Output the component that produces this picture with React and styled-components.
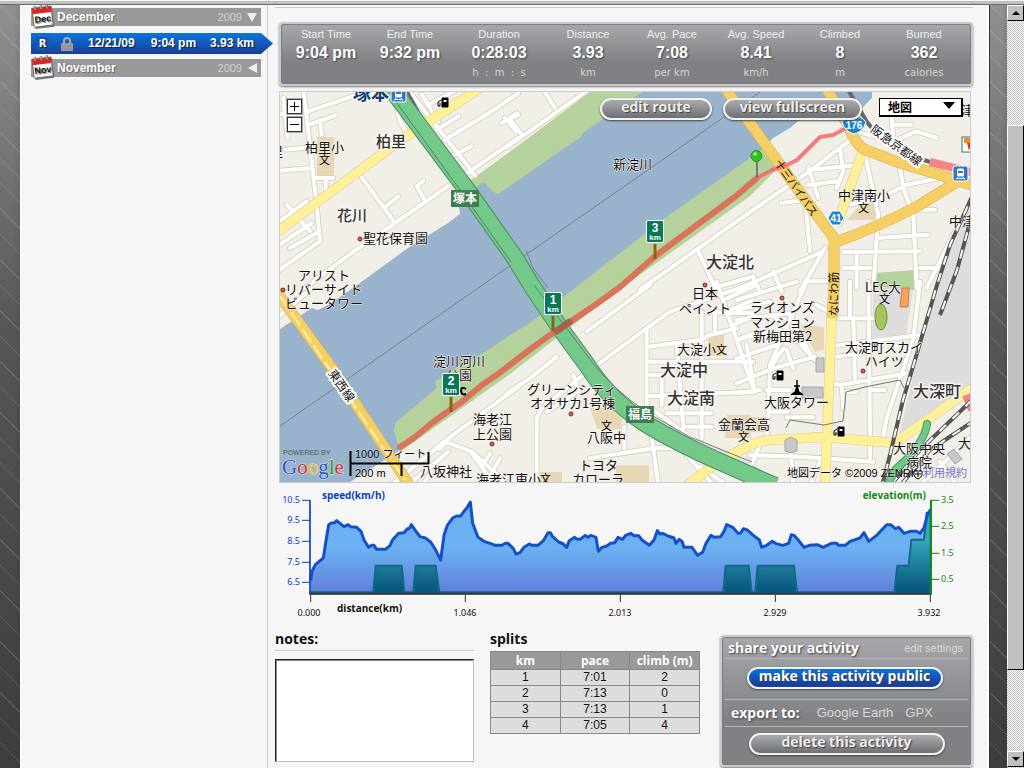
import React from 'react';
import styled, { createGlobalStyle, css } from 'styled-components';

const sans = '"Liberation Sans", "Noto Sans CJK JP", sans-serif';
const display = '"Open Sans", "Noto Sans", sans-serif';
const jp = '"Noto Sans CJK JP", "Liberation Sans", sans-serif';

const GlobalStyle = createGlobalStyle`
  *, *::before, *::after { box-sizing: border-box; }
  body { margin: 0; background: #4a4c4c; font-family: ${sans}; color: #111; }
  h2, p { margin: 0; }
  button { cursor: pointer; }
`;

/* ---------- page frame ---------- */

const Page = styled.div`
  display: flex;
  flex-direction: column;
  min-height: 100vh;
`;

const WindowEdge = styled.div`
  height: 5px;
  background: #c0c0c0;
  border-top: 1px solid #f4f4f4;
  border-bottom: 1px solid #6c6c6c;
`;

const Body = styled.div`
  display: flex;
  flex: 1;
`;

const Gutter = styled.div`
  width: ${(p) => (p.$side === 'left' ? 20 : 18)}px;
  flex: none;
  background:
    repeating-linear-gradient(45deg, transparent 0 17px, rgba(255, 255, 255, 0.12) 17px 18px),
    linear-gradient(90deg, transparent 0 70%, rgba(0, 0, 0, 0.08)),
    linear-gradient(#909090, #565858 42%, #3c3e3e);
  ${(p) => p.$side === 'right' && 'border-left: 1px solid #333;'}
`;

const Sheet = styled.div`
  display: flex;
  flex: 1;
  min-width: 0;
  background: #f6f6f6;
  border-left: 1px solid #fff;
  border-right: 2px solid #fff;
`;

/* ---------- window scroll bar ---------- */

const ScrollBar = styled.div`
  display: flex;
  flex-direction: column;
  flex: none;
  width: 17px;
  padding-bottom: 1px;
  background: repeating-conic-gradient(#fff 0 25%, #c0c0c0 0 50%) 0 0 / 2px 2px;
`;

const bevel = css`
  background: #c0c0c0;
  border: 1px solid;
  border-color: #fff #000 #000 #fff;
`;

const ScrollButton = styled.button`
  ${bevel}
  display: grid;
  place-items: center;
  height: 16px;
  padding: 0;
`;

const ScrollSpace = styled.div`
  flex: ${(p) => p.$share};
`;

const ScrollThumb = styled.div`
  ${bevel}
  flex: 546;
`;

/* ---------- sidebar ---------- */

const Sidebar = styled.nav`
  display: flex;
  flex-direction: column;
  flex: none;
  width: 247px;
  padding: 3px 6px 0 10px;
  border-right: 1px solid #ccc;
`;

const MonthRow = styled.button`
  position: relative;
  display: flex;
  align-items: center;
  height: 18px;
  padding: 0 4px 0 26px;
  border: 0;
  background: #999;
  color: #fff;
  font: bold 12px/18px ${sans};
  text-shadow: 1px 1px 1px #666;
`;

const MonthYear = styled.span`
  margin-left: auto;
  margin-right: 5px;
  color: #d2d2d2;
  font-size: 11px;
  font-weight: normal;
  text-shadow: none;
`;

const CalendarArt = styled.svg`
  position: absolute;
  left: 0;
  top: -4px;
`;

const ActivityLink = styled.a`
  display: flex;
  align-items: center;
  height: 21px;
  margin: 7px -12px 5px 0;
  padding: 0 19px 0 5px;
  background: linear-gradient(#0a74dc, #1a3f9a);
  clip-path: polygon(0 0, calc(100% - 12px) 0, 100% 50%, calc(100% - 12px) 100%, 0 100%);
  color: #fff;
  font: bold 12px/21px ${sans};
  text-decoration: none;
  text-shadow: 1px 1px 1px #123;
  white-space: nowrap;
`;

const ActivityDate = styled.span`margin-left: 15px;`;
const ActivityTime = styled.span`margin-left: 16px;`;
const ActivityDistance = styled.span`margin-left: auto;`;
const LockArt = styled.svg`margin-left: 12px;`;

/* ---------- main column ---------- */

const Main = styled.main`
  flex: 1;
  min-width: 0;
  padding: 2px 14px 1px 7px;
`;

const Rule = styled.hr`
  height: 1px;
  margin: 0;
  border: 0;
  background: #ccc;
`;

const metal = css`
  border: 2px solid #c9cacb;
  border-radius: 4px;
  background: linear-gradient(#a7a8ac, #808185 65%);
  box-shadow: 0 1px 2px #777, inset 0 0 1px 1px #7a7b7e;
  color: #fff;
`;

const StatsPanel = styled.dl`
  ${metal}
  display: grid;
  grid-template-columns: 84fr 84fr 94fr 84fr 84fr 84fr 84fr 84fr;
  margin: 14px 0 5px 4px;
  padding: 3px 5px 5px 3px;
  text-align: center;
`;

const StatLabel = styled.dt`
  color: #eee;
  font: 11px/14px ${sans};
`;

const StatValue = styled.dd`
  margin: 0;
  font: bold 16px/24px ${sans};
  text-shadow: 1px 1px 2px #444;
`;

const StatUnit = styled.dd`
  height: 14px;
  margin: 0;
  color: #d4d4d4;
  font: 10px/16px "DejaVu Sans", sans-serif;
  white-space: pre;
`;

const pillKinds = {
  gray: 'linear-gradient(#a9abae, #6d6f72)',
  blue: 'linear-gradient(#0872e0, #1b3f9c 85%)',
};

const Pill = styled.button`
  width: ${(p) => p.$width}px;
  height: 22px;
  padding: 0 0 4px;
  border: 2px solid #f2f2f2;
  border-radius: 11px;
  background: ${(p) => pillKinds[p.$kind || 'gray']};
  box-shadow: 0 1px 2px #444;
  color: ${(p) => (p.$kind === 'blue' ? '#fff' : '#ececec')};
  font: bold 14px/14px ${display};
  text-shadow: 1px 1px 1px #444;
  white-space: nowrap;
`;

/* ---------- map ---------- */

const MapFrame = styled.section`
  position: relative;
  margin: 0 2px 0 4px;
  border: 1px solid #ccc;
`;

const MapArt = styled.svg`
  display: block;
  width: 100%;
  height: auto;
`;

const ZoomControls = styled.div`
  position: absolute;
  top: 7px;
  left: 7px;
  display: grid;
  gap: 3px;
`;

const ZoomButton = styled.button`
  display: grid;
  place-items: center;
  width: 15px;
  height: 15px;
  padding: 0;
  border: 1px solid #333;
  background: #fff;
  box-shadow: 0 0 0 1px rgba(80, 80, 80, 0.4);
`;

const MapToolbar = styled.div`
  position: absolute;
  top: 6px;
  right: 7px;
  display: flex;
  gap: 11px;
`;

const MapTypeBox = styled.div`
  position: relative;
  margin-left: 6px;
`;

const MapTypeSelect = styled.select`
  width: 84px;
  height: 19px;
  padding: 0 8px;
  appearance: none;
  border: 1px solid #000;
  border-right-width: 2px;
  border-bottom-width: 2px;
  border-radius: 0;
  background: #fff;
  color: #000;
  font: bold 12px/16px ${jp};
`;

const SelectArrow = styled.svg`
  position: absolute;
  top: 4px;
  right: 8px;
  pointer-events: none;
`;

const ChartArt = styled.svg`
  display: block;
  width: 100%;
  height: auto;
  margin-top: 1px;
`;

/* ---------- bottom row ---------- */

const BottomRow = styled.div`
  display: grid;
  grid-template-columns: 215fr 230fr 253fr;
  align-items: start;
  margin-top: 8px;
`;

const NotesSection = styled.section`
  padding-right: 16px;
`;

const SplitsSection = styled.section`
  padding-right: 20px;
`;

const Heading = styled.h2`
  font: bold 14px/18px ${display};
`;

const NotesRule = styled(Rule)`
  margin: 2px 0 8px;
`;

const NotesBox = styled.textarea`
  display: block;
  width: 100%;
  height: 103px;
  border: 1px solid;
  border-color: #222 #bbb #bbb #222;
  border-radius: 0;
  background: #fff;
  box-shadow: inset 1px 1px 0 #888;
  resize: none;
`;

const SplitsTable = styled.table`
  width: 100%;
  margin-top: 3px;
  border-collapse: collapse;
  table-layout: fixed;
  text-align: center;

  th, td { height: 16px; padding: 0; border: 1px solid #888; }
  th { background: #999; color: #fff; font: bold 12px/17px ${display}; }
  td { background: #ddd; font: 12px/15px ${sans}; }
`;

const SharePanel = styled.section`
  ${metal}
  margin-top: 5px;
  padding: 0 3px 10px;
`;

const ShareHeader = styled.div`
  display: flex;
  align-items: center;
  justify-content: space-between;
  height: 22px;
  padding: 0 5px 0 3px;
  border-bottom: 1px solid #b4b5b8;
`;

const ShareTitle = styled(Heading)`
  text-shadow: 1px 1px 2px #444;
`;

const PanelLink = styled.a`
  color: #d8d8d8;
  font: ${(p) => (p.$large ? 13 : 11)}px/16px ${sans};
  text-decoration: none;
`;

const PanelButtonRow = styled.div`
  display: flex;
  justify-content: center;
  padding: ${(p) => (p.$last ? '6px 0 0' : '8px 4px 10px 0')};
`;

const ExportRow = styled.div`
  display: flex;
  align-items: center;
  height: 28px;
  padding-left: 6px;
  gap: 12px;
  border: 1px solid #b4b5b8;
  border-width: 1px 0;
`;

const ExportTitle = styled(ShareTitle)`
  margin-right: 5px;
`;

/* ---------- data ---------- */

const stats = [
  ['Start Time', '9:04 pm', ''],
  ['End Time', '9:32 pm', ''],
  ['Duration', '0:28:03', 'h  :  m  :  s'],
  ['Distance', '3.93', 'km'],
  ['Avg. Pace', '7:08', 'per km'],
  ['Avg. Speed', '8.41', 'km/h'],
  ['Climbed', '8', 'm'],
  ['Burned', '362', 'calories'],
];

const splits = [
  [1, '7:01', 2],
  [2, '7:13', 0],
  [3, '7:13', 1],
  [4, '7:05', 4],
];

/* Street tiles: drawn at three times map scale, placed by their top left corner. */
const tiles = [
  {
    x: 275, y: 88,
    d: 'M85 0L125 350L135 460L0 555M100 70L240 22M108 108L182 82M135 95L140 140M30 185L110 178M14 248L112 240M25 30L38 150M14 80L70 60M120 270H175M152 270V320M350 0L375 100L395 135M395 0L600 262M460 50L540 8M485 125L550 85M510 155L650 70L730 15M520 208L590 175M730 150L540 280L360 405L230 495L90 600M260 268L360 405M330 357L370 325M450 337L425 295L445 278M14 400L95 340M35 350L105 430M14 470L110 405M45 480L125 435M680 105L730 80M690 90L725 130M440 20L490 100',
  },
  {
    x: 510, y: 88,
    d: 'M-10 178L235 5M100 5L135 60M0 95L35 140M0 90L20 75M730 365L390 605M565 490L618 605M610 600L730 565',
  },
  {
    x: 740, y: 88,
    d: 'M-10 400L215 245L345 145M125 345L200 335M205 238L235 330M300 180L310 250L290 300M215 245L360 230M200 292L290 280M375 200L415 380L400 600M480 240L490 300L520 380L530 600M330 350L420 330L500 290L600 270M410 450L565 440M500 365L585 365M310 492L540 490M195 330L210 490M-10 605L250 490M350 500V600M345 130L460 160L530 130L590 150M455 80L460 160M460 110H515M200 580H260M100 550L125 610M255 480L180 610M660 400L560 600M540 540H600M40 570L60 610M310 540H390',
  },
  {
    x: 275, y: 285,
    d: 'M730 305L520 460L350 600M510 470L590 500L690 590M495 492L520 465M590 505L660 600M620 545L645 505M650 565L675 520M0 105L110 10M400 600L520 500M450 590L470 560',
  },
  {
    x: 510, y: 285,
    d: 'M-10 325L60 280L140 215M230 140L420 0M80 600V400L95 370L200 285L410 130L480 80L570 50L730 -5M410 130V350L445 600M343 425V490M240 520L430 490H520M415 185L570 165L600 150L680 130M415 230H730M420 270H450M415 333L500 330L730 320M500 180L520 430M575 80V460M455 270V360M470 385H605M520 425H605M620 -10L730 310M590 82L730 85M615 80V140M650 40L730 5M660 75L730 45M670 120L730 95M680 165L730 145M190 270L205 320L110 380M430 375L560 470L730 550M520 500L610 600M570 545L650 600',
  },
  {
    x: 740, y: 285,
    d: 'M-10 45L170 -10M200 -10L90 240L85 400L80 450M-10 105L150 85M-10 75L90 50M100 90L225 225M150 90L215 215M-10 295L100 250L225 215M-10 220L110 180M-10 165L80 140M20 180L45 320M-10 325L60 315M230 60L300 100H400M285 182L540 150M290 215L390 200M330 -10V100M385 -10L390 450M540 -10L520 160L440 400L430 450M280 295L300 300L500 265M305 300L310 370M320 320H350M390 315H435M90 380H145M140 397H220M30 510L180 515L400 530M150 470L160 600M60 480L30 550M240 530L210 600M340 100L345 290M540 600L700 450M600 530L650 600M390 475V520M80 315H150M140 195L160 250M90 250L130 190',
  },
];

/* [text, x, y, size] with x,y at the left end of the baseline */
const places = [
  ['柏里', 376, 147, 15, 1],
  ['花川', 337, 221, 15, 1],
  ['大淀北', 706, 268, 16, 1],
  ['大淀中', 660, 376, 16, 1],
  ['大淀南', 667, 404, 16, 1],
  ['大深町', 913, 397, 16, 1],
  ['柏里小', 305, 152, 13],
  ['聖花保育園', 363, 243, 13],
  ['新淀川', 613, 169, 13],
  ['アリスト', 298, 280, 13],
  ['リバーサイド', 285, 294, 13],
  ['ビュータワー', 285, 308, 13],
  ['淀川河川', 433, 366, 13],
  ['公園', 446, 380, 13],
  ['海老江', 473, 424, 13],
  ['上公園', 473, 439, 13],
  ['八坂神社', 420, 476, 13],
  ['海老江東小', 476, 484, 13],
  ['グリーンシティ', 527, 394, 13],
  ['オオサカ1号棟', 530, 408, 13],
  ['八阪中', 587, 442, 13],
  ['トヨタ', 579, 470, 13],
  ['カローラ', 572, 484, 13],
  ['日本', 692, 298, 13],
  ['ペイント', 679, 313, 13],
  ['大淀小', 677, 354, 13],
  ['金蘭会高', 718, 429, 13],
  ['ライオンズ', 750, 312, 13],
  ['マンション', 750, 327, 13],
  ['新梅田第2', 753, 341, 13],
  ['大阪タワー', 764, 407, 13],
  ['大淀町スカイ', 845, 352, 13],
  ['ハイツ', 865, 366, 13],
  ['大阪中央', 893, 453, 13],
  ['病院', 906, 467, 13],
  ['LEC大', 865, 292, 13],
  ['中津南小', 838, 200, 13],
  ['中津', 949, 226, 13],
  ['津', 961, 115, 13],
  ['里', 270, 156, 13],
  ['大', 958, 448, 13],
];

const schools = [[319, 164], [858, 212], [601, 430], [716, 354], [738, 441], [879, 303], [540, 483]];
const spots = [[360, 239], [283, 290], [492, 444], [571, 414], [705, 285], [782, 298], [863, 371]];
const pumps = [[438, 97], [773, 370], [834, 426]];
const kmPosts = [[553, 304, 1], [451, 385, 2], [655, 232, 3]];

const roads = {
  highway: 'M391 88L467 190L515 258L530 283L560 328L587 365Q608 398 643 422Q675 442 723 463L775 486',
  trunk: 'M276 291L332 368L410 486M725 88L750 123L807 202L834 238L834 288L832 318M826 88L848 125Q856 146 866 150L900 163L940 175L975 186M960 180L918 206Q880 226 836 242',
  local: 'M276 233L402 139L480 88M832 310L825 486M863 150L837 225M686 486L717 463L750 445Q762 440 773 440L823 437L895 443L975 386',
  rail: 'M975 190L950 245L937 285L915 360L903 400L890 455L882 486M972 215L957 270L940 315M972 400L920 450L890 486M975 420L930 450L900 486',
  ramp: 'M927 424Q926 436 910 456L895 470L888 484',
};

const speed =
  '122,290 126,262 136,242 160,222 168,170 176,122 184,117 194,116 200,110 222,128 234,122 242,128 260,130 273,142 282,168 296,190 304,184 312,184 320,196 346,196 360,185 368,167 386,148 402,146 412,134 418,134 424,122 438,142 450,158 466,162 482,174 496,196 512,228 522,154 532,124 548,102 560,96 572,96 582,82 592,70 601,54 608,118 624,160 642,172 660,178 676,184 696,184 706,178 714,178 730,194 738,210 750,206 762,190 778,180 786,184 804,184 820,170 834,146 841,146 848,158 866,174 880,180 890,190 898,170 914,160 922,166 930,166 946,154 954,160 962,154 978,160 985,202 996,190 1010,186 1022,178 1034,176 1044,160 1058,166 1066,155 1082,148 1092,155 1106,155 1116,168 1138,184 1152,168 1162,140 1170,150 1178,148 1194,156 1212,162 1218,178 1228,166 1236,172 1242,190 1266,190 1283,214 1298,205 1308,178 1323,154 1332,160 1352,158 1362,142 1370,122 1388,130 1404,148 1412,147 1420,134 1432,138 1450,154 1468,168 1475,190 1490,184 1507,172 1516,178 1538,184 1556,178 1564,152 1572,154 1588,172 1602,190 1618,184 1642,182 1659,190 1684,178 1700,178 1706,184 1726,184 1740,172 1770,162 1782,146 1796,172 1820,154 1850,122 1862,122 1876,134 1886,130 1902,148 1920,142 1940,142 1950,148 1962,132 1972,94 1982,76';

const climbs =
  'M120 325H310L317 245H395L403 325H430L437 245H497L508 325H1360L1367 245H1436L1445 325H1456L1463 245H1572L1581 325H1873L1882 245H1916L1924 167H1962L1970 86H1982V328H120Z';

/* ---------- drawings ---------- */

const Calendar = ({ month }) => (
  <CalendarArt width="24" height="25" viewBox="0 0 24 25" aria-hidden="true">
    <g transform="rotate(-7 12 12)">
      <rect x="3" y="4" width="19" height="20" fill="#777" />
      <rect x="2" y="3" width="19" height="19" fill="#fff" stroke="#555" strokeWidth=".7" />
      <rect x="2" y="3" width="19" height="6" fill="#d62828" />
      <path d="M5 1v4M11 1v4M17 1v4" stroke="#333" strokeWidth="2" />
      <path d="M5 1v4M11 1v4M17 1v4" stroke="#eee" strokeWidth="1" />
      <text x="11.500" y="18" textAnchor="middle" fontFamily="Liberation Sans, sans-serif" fontWeight="bold" fontSize="9" fill="#111">{month}</text>
    </g>
  </CalendarArt>
);

const Shield = ({ x, y, n, wide }) => (
  <g>
    {wide ? (
      <path d={`M${x - 12} ${y - 3}Q${x - 8} ${y - 9} ${x} ${y - 8}Q${x + 8} ${y - 9} ${x + 12} ${y - 3}Q${x + 9} ${y + 7} ${x} ${y + 9}Q${x - 9} ${y + 7} ${x - 12} ${y - 3}Z`} fill="#1d85d0" stroke="#fff" />
    ) : (
      <path d={`M${x - 8} ${y}l4 -7h8l4 7l-4 7h-8Z`} fill="#1d85d0" stroke="#fff" />
    )}
    <text x={x} y={y + 4} textAnchor="middle" fontFamily="Liberation Sans, sans-serif" fontWeight="bold" fontSize="10" fill="#fff">{n}</text>
  </g>
);

const Station = ({ x, y }) => (
  <g transform={`translate(${x} ${y})`}>
    <rect width="15" height="15" rx="2" fill="#2f74c8" stroke="#fff" />
    <rect x="4" y="2.500" width="7" height="8" rx="1.500" fill="#fff" />
    <path d="M5 5h5v2H5z" fill="#2f74c8" />
    <path d="M5 11l-2 2.500M10 11l2 2.500M4 12.500h7" stroke="#fff" />
  </g>
);

const Streets = ({ color, width }) => tiles.map((t) => (
  <g
    key={`${t.x}-${t.y}`}
    transform={`translate(${t.x} ${t.y}) scale(.33333)`}
    fill="none"
    strokeLinecap="round"
    strokeLinejoin="round"
  >
    <path d={t.d} stroke={color} strokeWidth={width} />
  </g>
));

const RouteMap = () => (
  <MapArt viewBox="280 92 690 390" role="img" aria-label="Route map">
    <rect x="280" y="92" width="690" height="390" fill="#f2efe9" />
    <path d="M970 195L955 232L937 285L918 355L898 440L970 390Z" fill="#ddd" />
    <path d="M317 137h17v39h-17zM860 205l17-2l-2 17h-28zM590 408h35l-5 21h-23zM708 335h16v21h-16zM727 415h24v23h-26zM540 472h22v10h-22zM616 465h33v17h-33zM800 325l24 2v23l-9 2zM740 417h29v15h-29z" fill="#e8d7b4" />
    <path d="M874 275l42-3l-10 63l-34 2z" fill="#ddd" />
    <path d="M875 273l40-3v20l-40-4z" fill="#b5d29c" />

    <path d="M280 329L312 308L318 310L328 305L353 288L408 248L448 223L460 214L458 200L475 184L642 92H872V98L860 110L846 122L835 115L812 110L790 128L773 138L762 150L560 320L395 424L400 450L350 482H280Z" fill="#99b3cc" />
    <path d="M464 185L515 148L590 92H642L583 133L580 138L573 142L510 186L498 194L492 191L484 182L470 191Z" fill="#b5d29c" />
    <path d="M400 452L394 430L396 422L437 388L435 382L457 367L485 352L515 332L530 323L575 288L665 218L750 158L763 149L778 168L750 196L620 289L510 374Z" fill="#b5d29c" />

    <Streets color="#d6cfc0" width={17} />
    <Streets color="#fff" width={12} />

    <path d="M280 426L550 238L760 92M526 250L533 268L548 288" fill="none" stroke="#667788" strokeWidth=".8" />

    <g fill="none" strokeLinejoin="round">
      <path d={roads.local} stroke="#d9cc92" strokeWidth="10" />
      <path d={roads.local} stroke="#fff09a" strokeWidth="9" />
      <path d={roads.trunk} stroke="#cfae55" strokeWidth="11" />
      <path d={roads.trunk} stroke="#f5cf63" strokeWidth="10" />
      <path d="M280 296L405 480" stroke="#fff0b0" strokeWidth="2" strokeDasharray="16 4" />

      <path d="M407 92L425 125M847 88L867 122L880 138L897 151L930 162" stroke="#666" strokeWidth="4" />
      <path d="M402 92L410 107M930 162L975 173M966 395L972 410" stroke="#f58484" strokeWidth="8" />
      <path d={roads.rail} stroke="#555" strokeWidth="4" />
      <path d={roads.rail} stroke="#fff" strokeWidth="2" strokeDasharray="9 9" />
      <path d={roads.ramp} stroke="#3f9a5c" strokeWidth="8" strokeLinecap="round" />
      <path d={roads.ramp} stroke="#6fc886" strokeWidth="6" strokeLinecap="round" />

      <path d={roads.highway} stroke="#4c8f62" strokeWidth="18" />
      <path d={roads.highway} stroke="#73c98a" strokeWidth="16" />
      <path d="M386 88L463 194L511 262" stroke="#4b7058" strokeWidth=".8" />
      <path d="M534 285L592 362Q612 388 646 412L690 437L752 462M786 428L790 420L824 425L843 421L846 392L865 387L900 380L904 388" stroke="#777" />
    </g>

    <g fill="none" strokeLinejoin="round" strokeLinecap="round">
      <path d="M400 447L415 437L432 423L447 412L463 401L482 385L498 374L515 361L532 348L550 335L570 322L595 305L620 287L636 273L653 258L670 245L697 225L720 208L736 196L750 184L757 178" stroke="#d97359" strokeWidth="6" />
      <path d="M757 178L772 170L787 165L797 160L808 149L820 137L833 135L848 127" stroke="#f26a68" strokeWidth="4" strokeOpacity=".85" />
      <path d="M557 331l12 -9" stroke="#9a5942" strokeWidth="7" strokeOpacity=".7" />
    </g>

    <path d="M802 387h21v11h-21zM816 358h8v14h-8zM785 440l6-3l6 3v11l-6 2l-6-2zM947 454l7-5l8 10l-7 5z" fill="#c8c8c8" stroke="#999" strokeWidth=".8" />
    <ellipse cx="881" cy="317" rx="6" ry="13" fill="#a6c45e" stroke="#758d3a" />
    <path d="M902 288h7l-1 19h-8z" fill="#f5a35f" stroke="#cc7c40" />
    <path d="M797 380v8M794 386h6M797 386l-2 7h4zM791 395l4-3h4l4 3" stroke="#000" fill="#000" strokeWidth="1.500" />
    <path d="M466 389q-5 -3 -5 2q1 5 5 3" fill="none" stroke="#000" strokeWidth="2" />

    <g fontFamily={jp} paintOrder="stroke" stroke="#f7f5f1" strokeLinejoin="round">
      {places.map(([t, x, y, size, district]) => (
        <text key={`${t}${x}`} x={x} y={y} fontSize={size} strokeWidth={district ? 3 : 1} fontWeight={district ? 500 : 400} fill={district ? '#333' : '#111'}>{t}</text>
      ))}
      <text x="353" y="100" fontSize="18" fontWeight="700" fill="#123f70" strokeWidth="3">塚本</text>
    </g>
    <g fill="#111" fontFamily={jp} textAnchor="middle" paintOrder="stroke" stroke="#fff" strokeLinejoin="round" strokeWidth="4">
      <text transform="translate(338 388) rotate(55)" fontSize="12">東西線</text>
      <text transform="translate(894 149) rotate(36)" fontSize="12">阪急京都線</text>
      <text transform="translate(793 190) rotate(55)" fontSize="11" strokeWidth="0">十三バイパス</text>
      <text transform="translate(838 294) rotate(-90)" fontSize="11" strokeWidth="0">なにわ筋</text>
    </g>
    {schools.map(([x, y]) => (
      <text key={`${x}-${y}`} x={x} y={y} fontFamily={jp} fontSize="11" fill="#000">文</text>
    ))}
    {spots.map(([x, y]) => (
      <circle key={`${x}-${y}`} cx={x} cy={y} r="2" fill="#ef5b42" stroke="#60302a" />
    ))}
    {pumps.map(([x, y]) => (
      <g key={`${x}-${y}`} transform={`translate(${x} ${y})`}>
        <path d="M4 1h6v9H4z" fill="#000" stroke="#000" />
        <path d="M3 3L0 5v4h2V6" fill="none" stroke="#000" />
        <path d="M5.500 3h3v2h-3z" fill="#fff" />
      </g>
    ))}

    {[['塚本', 451, 190], ['福島', 626, 406]].map(([t, x, y]) => (
      <g key={t}>
        <rect x={x} y={y} width="28" height="17" fill="#3e7e50" />
        <text x={x + 14} y={y + 13} textAnchor="middle" fontFamily={jp} fontWeight="700" fontSize="12" fill="#fff">{t}</text>
      </g>
    ))}
    <Shield x={854} y={125} n="176" wide />
    <Shield x={836} y={218} n="41" />
    <Station x={391} y={87} />
    <Station x={953} y={166} />
    <rect x="962" y="137" width="14" height="15" fill="#fff" stroke="#16825b" />
    <path d="M964 138h8v5h-8z" fill="#f08a24" />
    <path d="M967 143h4l-2 8z" fill="#e03030" />

    <path d="M757 160V178" stroke="#777" strokeWidth="2" />
    <circle cx="756.500" cy="156" r="5.500" fill="#2fc21c" stroke="#1c8a10" strokeWidth=".8" />
    <circle cx="755" cy="154" r="1.800" fill="#a4f393" />

    {kmPosts.map(([x, y, n]) => (
      <g key={n} textAnchor="middle" fill="#fff" fontFamily="Liberation Sans, sans-serif" fontWeight="bold">
        <path d={`M${x} ${y + 12}V${y + 27}`} stroke="#8a6410" strokeWidth="3" />
        <rect x={x - 9} y={y - 12} width="18" height="23" rx="2" fill="#fff" />
        <rect x={x - 8} y={y - 11} width="16" height="21" rx="1" fill="#087857" />
        <text x={x} y={y} fontSize="12">{n}</text>
        <text x={x} y={y + 8} fontSize="8">km</text>
      </g>
    ))}

    <text x="283" y="455" fontFamily="Liberation Sans, sans-serif" fontSize="7" fill="#555">POWERED BY</text>
    <text x="282" y="474" fontFamily="Liberation Serif, serif" fontSize="21" paintOrder="stroke" stroke="#dfe7ee" strokeWidth="1" fill="#2a56c6">
      G<tspan fill="#d8322c">o</tspan><tspan fill="#eeb211">o</tspan>g<tspan fill="#2c9a3c">l</tspan><tspan fill="#d8322c">e</tspan>
    </text>
    <path d="M350.500 451V476M350 463.500H429M428.500 452V464M401.500 464V476" stroke="#000" strokeWidth="2" />
    <g fontFamily={sans} fontSize="11" fill="#000" paintOrder="stroke" stroke="#fff" strokeOpacity=".4" strokeWidth="1">
      <text x="355" y="458">1000 フィート</text>
      <text x="355" y="477">200 m</text>
      <text x="787" y="477">地図データ ©2009 ZENRIN</text>
    </g>
    <path d="M914 471h8v4q-1 3 -4 4q-3 -1 -4 -4zM918 472v5M915 474h6" fill="#fff" stroke="#000" />
    <a href="#terms">
      <text x="923" y="477" fontFamily={jp} fontSize="11" fill="#7777cc">利用規約</text>
    </a>
  </MapArt>
);

const ActivityChart = () => (
  <ChartArt viewBox="5 0 698 138" role="img" aria-label="Speed and elevation over distance">
    <defs>
      <linearGradient id="speedFill" gradientUnits="userSpaceOnUse" x1="0" y1="190" x2="0" y2="328">
        <stop offset="0" stopColor="#6cb2f3" />
        <stop offset="1" stopColor="#5f7fd9" />
      </linearGradient>
      <linearGradient id="climbFill" gradientUnits="userSpaceOnUse" x1="0" y1="170" x2="0" y2="310">
        <stop offset="0" stopColor="#35a5b8" />
        <stop offset="1" stopColor="#0a5a80" />
      </linearGradient>
    </defs>
    <svg x="0" y="0" width="700" height="138" viewBox="0 0 2100 414">
      <polygon points={`122,328 ${speed} 1982,328`} fill="url(#speedFill)" />
      <path d={climbs} fill="url(#climbFill)" stroke="#0d6a88" strokeWidth="6" strokeLinejoin="round" />
      <polyline points={speed} fill="none" stroke="#1450c8" strokeWidth="9" strokeLinejoin="round" />
      <path d="M120 329H1984" stroke="#333" strokeWidth="6" />
      <path d="M122 332V354M586 332V354M1051 332V354M1516 332V354M1981 332V354" stroke="#333" strokeWidth="3" />
      <path d="M120 48V332" stroke="#0a3fc0" strokeWidth="5" />
      <path d="M96 49H120M96 109H120M96 172H120M96 235H120M96 295H120" stroke="#0a3fc0" strokeWidth="3" />
      <path d="M1983 48V332" stroke="#138a13" strokeWidth="6" />
      <path d="M1983 49H2008M1983 127H2008M1983 208H2008M1983 286H2008" stroke="#138a13" strokeWidth="3" />
    </svg>
    <g fontFamily="Noto Sans, sans-serif" fontSize="9" fill="#0a3fc0" textAnchor="end">
      {[['10.5', 19], ['9.5', 39], ['8.5', 60], ['7.5', 81], ['6.5', 101]].map(([t, y]) => <text key={t} x="30" y={y}>{t}</text>)}
    </g>
    <g fontFamily="Noto Sans, sans-serif" fontSize="9" fill="#138a13">
      {[['3.5', 19], ['2.5', 45], ['1.5', 72], ['0.5', 98]].map(([t, y]) => <text key={t} x="671" y={y}>{t}</text>)}
    </g>
    <g fontFamily="Noto Sans, sans-serif" fontSize="9" fill="#111" textAnchor="middle">
      {[['0.000', 39], ['1.046', 195], ['2.013', 350], ['2.929', 505], ['3.932', 659]].map(([t, x]) => <text key={t} x={x} y="132">{t}</text>)}
    </g>
    <g fontFamily="Open Sans, sans-serif" fontSize="10" fontWeight="bold">
      <text x="52" y="15" fill="#0a3fc0">speed(km/h)</text>
      <text x="656" y="15" fill="#138a13" textAnchor="end">elevation(m)</text>
      <text x="67" y="128" fill="#111">distance(km)</text>
    </g>
  </ChartArt>
);

/* ---------- page ---------- */

export default function App() {
  return (
    <>
      <GlobalStyle />
      <Page>
        <WindowEdge />
        <Body>
          <Gutter $side="left" />
          <Sheet>
            <Sidebar aria-label="Activities">
              <MonthRow type="button">
                <Calendar month="Dec" />
                December
                <MonthYear>2009</MonthYear>
                <svg width="10" height="10" aria-hidden="true"><path d="M0 1h10L5 10z" fill="#eee" /></svg>
              </MonthRow>
              <ActivityLink href="#activity">
                <svg width="13" height="13" aria-hidden="true">
                  <rect width="13" height="13" rx="3" fill="#1b56a8" />
                  <text x="6.500" y="10" textAnchor="middle" fontFamily="DejaVu Sans, sans-serif" fontWeight="bold" fontSize="10" fill="#fff">R</text>
                </svg>
                <LockArt width="12" height="14" aria-hidden="true">
                  <path d="M3 7V4a3 3 0 0 1 6 0v3" fill="none" stroke="#a9a9a9" strokeWidth="2" />
                  <rect x="0" y="6" width="12" height="8" rx="1" fill="#9d9d9d" />
                  <path d="M1 9h10M1 12h10" stroke="#8c8c8c" />
                </LockArt>
                <ActivityDate>12/21/09</ActivityDate>
                <ActivityTime>9:04 pm</ActivityTime>
                <ActivityDistance>3.93 km</ActivityDistance>
              </ActivityLink>
              <MonthRow type="button">
                <Calendar month="Nov" />
                November
                <MonthYear>2009</MonthYear>
                <svg width="10" height="10" aria-hidden="true"><path d="M10 0v10L1 5z" fill="#eee" /></svg>
              </MonthRow>
            </Sidebar>

            <Main>
              <Rule />
              <StatsPanel>
                {stats.map(([label, value, unit]) => (
                  <div key={label}>
                    <StatLabel>{label}</StatLabel>
                    <StatValue>{value}</StatValue>
                    <StatUnit>{unit}</StatUnit>
                  </div>
                ))}
              </StatsPanel>

              <MapFrame>
                <RouteMap />
                <ZoomControls>
                  <ZoomButton type="button" aria-label="Zoom in">
                    <svg width="9" height="9"><path d="M0 4.500h9M4.500 0v9" stroke="#000" /></svg>
                  </ZoomButton>
                  <ZoomButton type="button" aria-label="Zoom out">
                    <svg width="9" height="9"><path d="M0 4.500h9" stroke="#000" /></svg>
                  </ZoomButton>
                </ZoomControls>
                <MapToolbar>
                  <Pill type="button" $width={112}>edit route</Pill>
                  <Pill type="button" $width={139}>view fullscreen</Pill>
                  <MapTypeBox>
                    <MapTypeSelect aria-label="Map type" defaultValue="map">
                      <option value="map">地図</option>
                    </MapTypeSelect>
                    <SelectArrow width="12" height="7" aria-hidden="true"><path d="M0 0h12L6 7z" /></SelectArrow>
                  </MapTypeBox>
                </MapToolbar>
              </MapFrame>

              <ActivityChart />

              <BottomRow>
                <NotesSection>
                  <Heading as="label" htmlFor="notes">notes:</Heading>
                  <NotesRule />
                  <NotesBox id="notes" />
                </NotesSection>
                <SplitsSection>
                  <Heading>splits</Heading>
                  <SplitsTable>
                    <thead>
                      <tr><th>km</th><th>pace</th><th>climb (m)</th></tr>
                    </thead>
                    <tbody>
                      {splits.map(([km, pace, climb]) => (
                        <tr key={km}><td>{km}</td><td>{pace}</td><td>{climb}</td></tr>
                      ))}
                    </tbody>
                  </SplitsTable>
                </SplitsSection>
                <SharePanel>
                  <ShareHeader>
                    <ShareTitle>share your activity</ShareTitle>
                    <PanelLink href="#settings">edit settings</PanelLink>
                  </ShareHeader>
                  <PanelButtonRow>
                    <Pill type="button" $width={196} $kind="blue">make this activity public</Pill>
                  </PanelButtonRow>
                  <ExportRow>
                    <ExportTitle>export to:</ExportTitle>
                    <PanelLink $large href="#google-earth">Google Earth</PanelLink>
                    <PanelLink $large href="#gpx">GPX</PanelLink>
                  </ExportRow>
                  <PanelButtonRow $last>
                    <Pill type="button" $width={196}>delete this activity</Pill>
                  </PanelButtonRow>
                </SharePanel>
              </BottomRow>
            </Main>
          </Sheet>
          <Gutter $side="right" />
          <ScrollBar>
            <ScrollButton type="button" aria-label="Scroll up">
              <svg width="8" height="4"><path d="M0 4h8L4 0z" /></svg>
            </ScrollButton>
            <ScrollSpace $share={104} />
            <ScrollThumb />
            <ScrollSpace $share={81} />
            <ScrollButton type="button" aria-label="Scroll down">
              <svg width="8" height="4"><path d="M0 0h8L4 4z" /></svg>
            </ScrollButton>
          </ScrollBar>
        </Body>
      </Page>
    </>
  );
}
